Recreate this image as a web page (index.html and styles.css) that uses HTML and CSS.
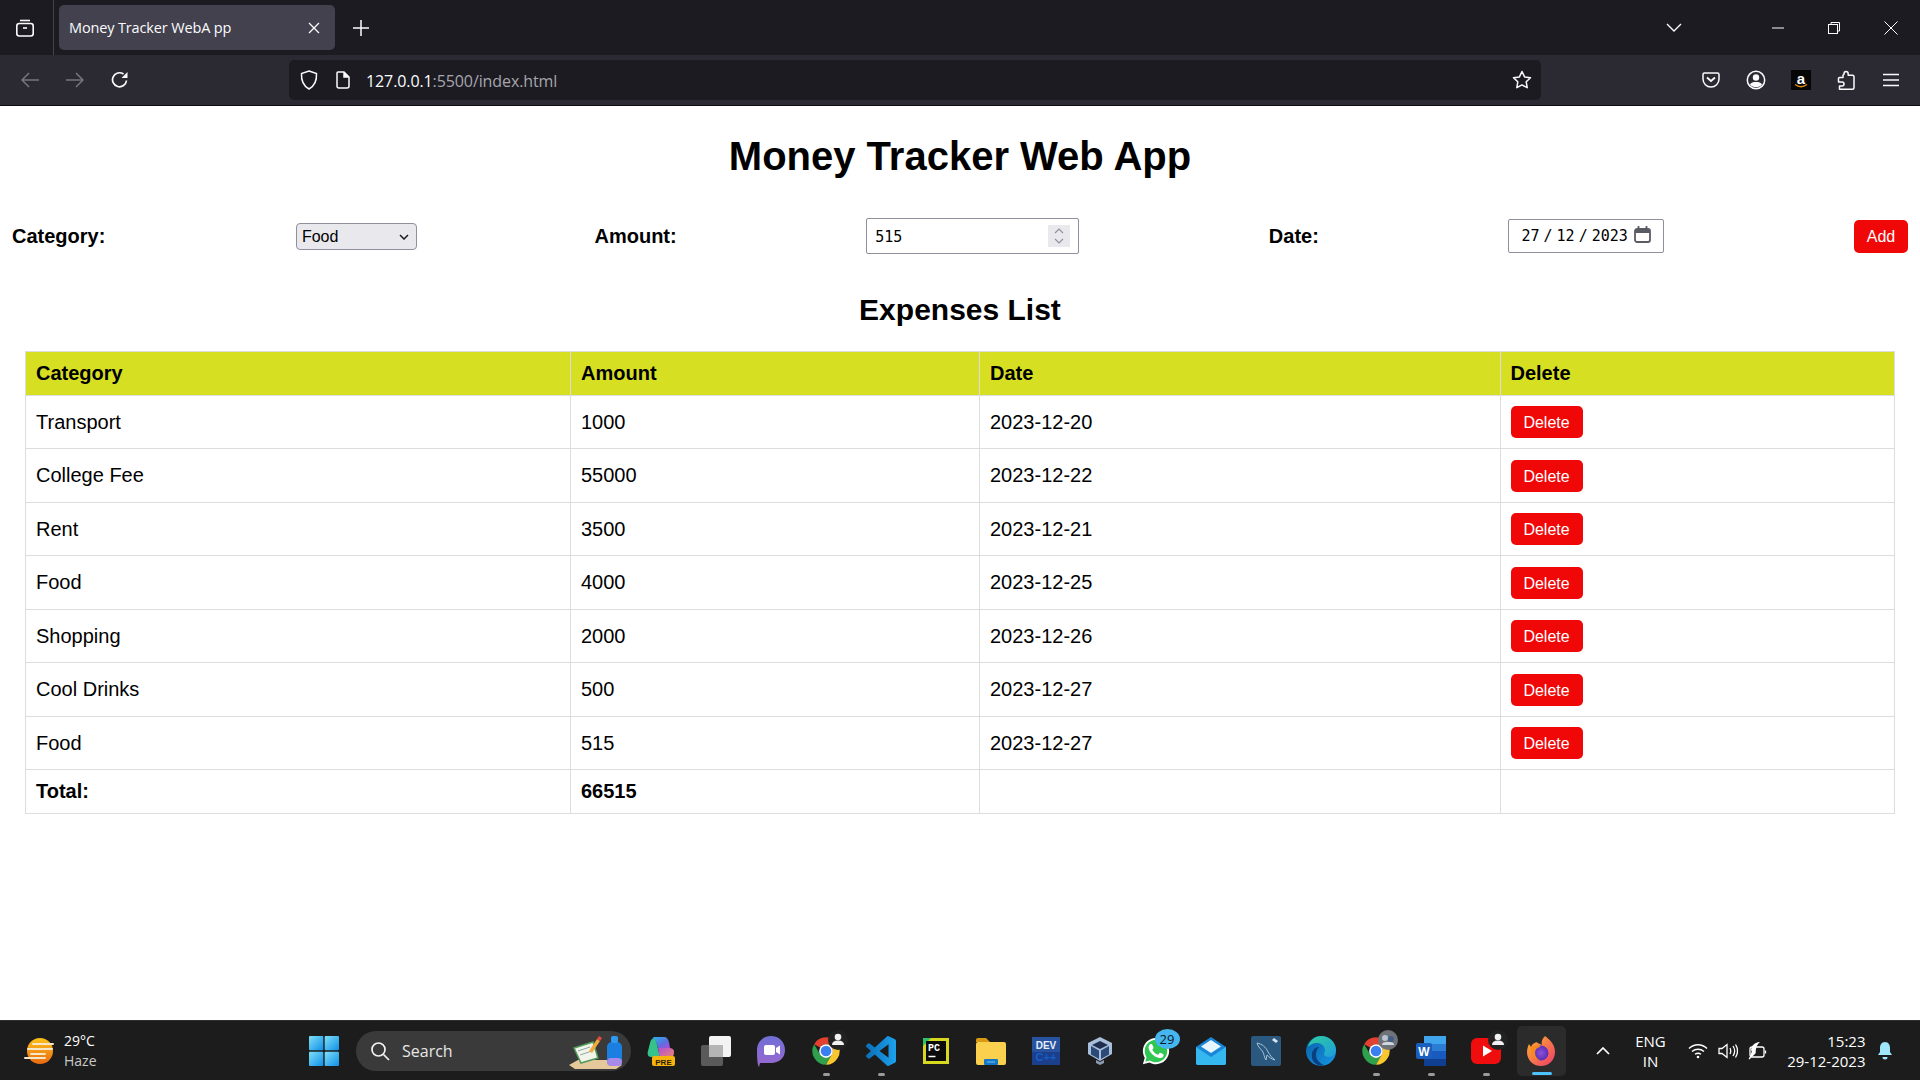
FILE: index.html
```html
<!DOCTYPE html>
<html lang="en">
<head>
<meta charset="utf-8">
<title>Money Tracker Web App</title>
<link rel="stylesheet" href="styles.css">
</head>
<body>
<header class="chrome">
  <div class="tabstrip">
    <div class="tablist-btn">
      <svg width="20" height="20" viewBox="0 0 20 20" fill="none" stroke="#fbfbfe" stroke-width="1.6"><path d="M5 2.5h10"/><rect x="1.8" y="5.5" width="16.4" height="12.5" rx="2.5"/><path d="M8 10h4"/></svg>
    </div>
    <div class="tab-sep"></div>
    <div class="tab">
      <span class="tab-title">Money Tracker WebA pp</span>
      <svg class="tab-close" width="12" height="12" viewBox="0 0 12 12" stroke="#fbfbfe" stroke-width="1.3"><path d="M1 1l10 10M11 1L1 11"/></svg>
    </div>
    <div class="newtab">
      <svg width="16" height="16" viewBox="0 0 16 16" stroke="#fbfbfe" stroke-width="1.5"><path d="M8 0v16M0 8h16"/></svg>
    </div>
    <div class="strip-spacer"></div>
    <svg class="listall" width="16" height="10" viewBox="0 0 16 10" fill="none" stroke="#fbfbfe" stroke-width="1.4"><path d="M1 1l7 7 7-7"/></svg>
    <div class="winbtn win-min"><svg width="12" height="2" viewBox="0 0 12 2" stroke="#fbfbfe"><path d="M0 1h12"/></svg></div>
    <div class="winbtn win-max"><svg width="12" height="12" viewBox="0 0 12 12" fill="none" stroke="#fbfbfe"><path d="M3 2.5V.5h8.5V9H9.5"/><rect x=".5" y="2.5" width="9" height="9"/></svg></div>
    <div class="winbtn win-close"><svg width="14" height="14" viewBox="0 0 14 14" stroke="#fbfbfe"><path d="M.5.5l13 13M13.500.5l-13 13"/></svg></div>
  </div>
  <div class="navbar">
    <div class="nav-btn nav-first"><svg width="18" height="16" viewBox="0 0 18 16" fill="none" stroke="#77767f" stroke-width="1.5"><path d="M18 8H1M8 1L1 8l7 7"/></svg></div>
    <div class="nav-btn"><svg width="18" height="16" viewBox="0 0 18 16" fill="none" stroke="#77767f" stroke-width="1.5"><path d="M0 8h17M10 1l7 7-7 7"/></svg></div>
    <div class="nav-btn"><svg width="18" height="18" viewBox="0 0 18 18" fill="none" stroke="#fbfbfe" stroke-width="1.7"><path d="M15.500 9.500A7 7 0 1 1 12.500 3"/><path d="M16.500 1v6h-6z" fill="#fbfbfe" stroke="none"/></svg></div>
    <div class="urlbar">
      <svg class="url-shield" width="18" height="20" viewBox="0 0 18 20" fill="none" stroke="#fbfbfe" stroke-width="1.5"><path d="M9 1l7.500 2.500c.4 7-2 12.500-7.500 15.500C3.500 16 1.100 10.500 1.500 3.500z"/></svg>
      <svg class="url-page" width="16" height="18" viewBox="0 0 16 18" fill="none" stroke="#fbfbfe" stroke-width="1.5"><path d="M3 1h6l5 5v9a2 2 0 0 1-2 2H4a2 2 0 0 1-2-2V2a1 1 0 0 1 1-1z"/><path d="M9 1v5h5" fill="#fbfbfe"/></svg>
      <span class="url-text"><span class="url-host">127.0.0.1</span>:5500/index.html</span>
      <svg class="url-star" width="20" height="20" viewBox="0 0 20 20" fill="none" stroke="#fbfbfe" stroke-width="1.5" stroke-linejoin="round"><path d="M10 1.500l2.600 5.400 5.900.8-4.300 4.100 1 5.900L10 14.900l-5.200 2.800 1-5.900L1.500 7.700l5.900-.8z"/></svg>
    </div>
    <div class="tools">
      <div class="tool"><svg width="18" height="16" viewBox="0 0 18 16" fill="none" stroke="#fbfbfe" stroke-width="1.5"><path d="M2.500 1h13A1.500 1.500 0 0 1 17 2.500V7a8 8 0 0 1-16 0V2.500A1.500 1.500 0 0 1 2.500 1z"/><path d="M5 5.500l4 3.500 4-3.500" stroke-width="1.800"/></svg></div>
      <div class="tool"><svg width="20" height="20" viewBox="0 0 20 20" fill="none" stroke="#fbfbfe" stroke-width="1.500"><circle cx="10" cy="10" r="8.700"/><circle cx="10" cy="7.500" r="3.200" fill="#fbfbfe" stroke="none"/><path d="M4 14.500c1-2 3-2.500 6-2.500s5 .5 6 2.500c-1.500 1.800-3.500 2.700-6 2.700s-4.500-.9-6-2.700z" fill="#fbfbfe" stroke="none"/></svg></div>
      <div class="tool"><svg width="20" height="20" viewBox="0 0 20 20"><rect width="20" height="20" rx="1" fill="#050505"/><text x="10" y="13.500" class="amz-a">a</text><path d="M4 14.500c4 3 8 3 12 0" fill="none" stroke="#e08a10" stroke-width="1.500"/></svg></div>
      <div class="tool"><svg width="18" height="20" viewBox="0 0 18 20" fill="none" stroke="#fbfbfe" stroke-width="1.500" stroke-linejoin="round"><path d="M9 1.500c1.500 0 2.200 1 2.200 2.500v1.200h4.300c.8 0 1.500.7 1.500 1.500v11c0 .8-.7 1.500-1.500 1.500H2.500V16H5c1.200 0 2-.8 2-2s-.8-2-2-2H1.500V8.500c0-.6.500-1 1-1H6V5.200L7 4c0-1.500.5-2.500 2-2.500z"/></svg></div>
      <div class="tool"><svg width="16" height="14" viewBox="0 0 16 14" stroke="#fbfbfe" stroke-width="1.500"><path d="M0 1.500h16M0 7h16M0 12.500h16"/></svg></div>
    </div>
  </div>
</header>

<main class="page">
  <h1 class="title">Money Tracker Web App</h1>
  <form class="entry">
    <label class="entry-label">Category:</label>
    <div class="select-box">
      <select class="select"><option>Food</option></select>
      <svg class="select-arrow" width="10" height="6" viewBox="0 0 10 6" fill="none" stroke="#1b1b1f" stroke-width="1.500"><path d="M1 1l4 4 4-4"/></svg>
    </div>
    <label class="entry-label entry-amount">Amount:</label>
    <div class="number-box">
      <input class="number" type="text" value="515">
      <div class="spin"><svg width="12" height="18" viewBox="0 0 12 18" fill="none" stroke="#8f8f9d" stroke-width="1.200"><path d="M2 6l4-4 4 4M2 12l4 4 4-4"/></svg></div>
    </div>
    <label class="entry-label">Date:</label>
    <div class="date-box">
      <input class="date" type="text" value="27 / 12 / 2023">
      <svg class="cal" width="17" height="17" viewBox="0 0 17 17" fill="none" stroke="#5b5b66" stroke-width="1.800"><rect x="1" y="3" width="15" height="13" rx="2"/><path d="M1 5.500h15" stroke-width="3"/><path d="M4.500 0v3M12.500 0v3"/></svg>
    </div>
    <button class="btn btn-add" type="button">Add</button>
  </form>
  <h2 class="subtitle">Expenses List</h2>
  <table class="expenses">
    <colgroup><col class="col-a"><col class="col-b"><col class="col-c"><col></colgroup>
    <thead><tr><th>Category</th><th>Amount</th><th>Date</th><th>Delete</th></tr></thead>
    <tbody>
      <tr><td>Transport</td><td>1000</td><td>2023-12-20</td><td><button class="btn btn-del" type="button">Delete</button></td></tr>
      <tr><td>College Fee</td><td>55000</td><td>2023-12-22</td><td><button class="btn btn-del" type="button">Delete</button></td></tr>
      <tr><td>Rent</td><td>3500</td><td>2023-12-21</td><td><button class="btn btn-del" type="button">Delete</button></td></tr>
      <tr><td>Food</td><td>4000</td><td>2023-12-25</td><td><button class="btn btn-del" type="button">Delete</button></td></tr>
      <tr><td>Shopping</td><td>2000</td><td>2023-12-26</td><td><button class="btn btn-del" type="button">Delete</button></td></tr>
      <tr><td>Cool Drinks</td><td>500</td><td>2023-12-27</td><td><button class="btn btn-del" type="button">Delete</button></td></tr>
      <tr><td>Food</td><td>515</td><td>2023-12-27</td><td><button class="btn btn-del" type="button">Delete</button></td></tr>
    </tbody>
    <tfoot><tr><td>Total:</td><td>66515</td><td></td><td></td></tr></tfoot>
  </table>
</main>

<footer class="taskbar">
  <div class="weather">
    <svg width="32" height="28" viewBox="0 0 32 28"><defs><linearGradient id="sun" x1="0" y1="0" x2="0" y2="1"><stop offset="0" stop-color="#fdc21a"/><stop offset="1" stop-color="#e96a12"/></linearGradient></defs><circle cx="16" cy="14" r="13" fill="url(#sun)"/><g stroke="#f6e7c8" stroke-width="2" stroke-linecap="round"><path d="M9 7h20M4 12h24M7 17h14M1 21h20"/></g></svg>
    <div class="weather-text"><span>29°C</span><span class="weather-sub">Haze</span></div>
  </div>
  <div class="slot start"><svg width="30" height="30" viewBox="0 0 30 30"><defs><linearGradient id="win" x1="0" y1="0" x2="1" y2="1"><stop offset="0" stop-color="#7fe0f8"/><stop offset="1" stop-color="#0e8fe8"/></linearGradient></defs><g fill="url(#win)"><rect width="14.300" height="14.300" rx="1"/><rect x="15.700" width="14.300" height="14.300" rx="1"/><rect y="15.700" width="14.300" height="14.300" rx="1"/><rect x="15.700" y="15.700" width="14.300" height="14.300" rx="1"/></g></svg></div>
  <div class="search">
    <svg width="20" height="20" viewBox="0 0 20 20" fill="none" stroke="#f2f2f2" stroke-width="1.700"><circle cx="8.500" cy="8.500" r="6.500"/><path d="M13.500 13.500l5.500 5.500"/></svg>
    <span class="search-text">Search</span>
    <svg class="search-art" width="56" height="36" viewBox="0 0 56 36"><path d="M2 31l9-5h36l8 5-6 4H8z" fill="#e6c99a"/><path d="M7 14l19-6 5 16-17 5z" fill="#f2f4ea" stroke="#4f9a5c" stroke-width="1.500"/><path d="M11 17l12-4M13 21l12-4" stroke="#8aa" stroke-width="1"/><path d="M22 17l8-12 3 2-8 12z" fill="#f2a93b"/><path d="M30 5l2-3 3 2-2 3z" fill="#e8483f"/><rect x="40" y="8" width="15" height="24" rx="5" fill="#1a7fe0"/><rect x="44" y="2" width="7" height="7" rx="2" fill="#2f9bf0"/><rect x="40" y="24" width="15" height="8" rx="4" fill="#a88ae8"/></svg>
  </div>
  <div class="slot">
    <svg width="30" height="32" viewBox="0 0 30 32"><defs><linearGradient id="cop1" x1="0" y1="0" x2="1" y2="1"><stop offset="0" stop-color="#2bb5e8"/><stop offset=".6" stop-color="#5c6fe0"/><stop offset="1" stop-color="#b14cd8"/></linearGradient><linearGradient id="cop2" x1="0" y1="0" x2="1" y2="1"><stop offset="0" stop-color="#b24fd6"/><stop offset="1" stop-color="#f08a6a"/></linearGradient></defs><path d="M8 2h10c3 0 4 2 5 5l1 6H12L10 7c-1-2-2-3-4-3z" fill="url(#cop1)"/><path d="M7 4c2 0 3 2 3.500 4L14 22H5c-3 0-4-3-3-6L4 8c.5-2 1-4 3-4z" fill="#35c28b"/><path d="M12 13h11c3 0 5 1 5 4 0 5-3 7-6 7H14z" fill="url(#cop2)"/><rect x="6" y="21" width="23" height="10" rx="2" fill="#f7b40b"/><text x="17.500" y="29.500" class="pre">PRE</text></svg>
  </div>
  <div class="slot">
    <svg width="30" height="30" viewBox="0 0 30 30"><rect y="9" width="22" height="21" rx="2" fill="#5a5a5a"/><rect x="8" width="22" height="21" rx="2" fill="#f3f3f3"/><rect x="8" y="9" width="14" height="12" fill="#b5b5b5"/></svg>
  </div>
  <div class="slot">
    <svg width="30" height="32" viewBox="0 0 30 32"><defs><linearGradient id="meet" x1="0" y1="0" x2="0" y2="1"><stop offset="0" stop-color="#6f6fd6"/><stop offset="1" stop-color="#9a68cf"/></linearGradient></defs><path d="M15 1c8 0 14 6 14 14s-6 13-14 13H4l-1 4c-1-1-2-5-2-17C1 7 7 1 15 1z" fill="url(#meet)"/><rect x="8" y="10" width="11" height="10" rx="2" fill="#fff"/><path d="M20 13l4-2.500v9L20 17z" fill="#fff"/></svg>
  </div>
  <div class="slot chrome-slot running">
    <svg width="30" height="30" viewBox="0 0 48 48"><path d="M24 2a22 22 0 0 1 19 11H24a11 11 0 0 0-9.500 5.500L5 13A22 22 0 0 1 24 2z" fill="#e3402f"/><path d="M5 13a22 22 0 0 0 19 33l9.500-17a11 11 0 0 1-19 0z" fill="#2fa04c"/><path d="M43 13H24a11 11 0 0 1 9.500 16L24 46A22 22 0 0 0 43 13z" fill="#f7c72d"/><circle cx="24" cy="24" r="11" fill="#fff"/><circle cx="24" cy="24" r="8.500" fill="#3a7ff0"/></svg>
    <svg class="badge-person" width="20" height="20" viewBox="0 0 20 20"><circle cx="10" cy="10" r="10" fill="#222"/><circle cx="10" cy="7" r="3.300" fill="#f2f2f2"/><path d="M4 15c0-3 2-4.500 6-4.500s6 1.500 6 4.500z" fill="#f2f2f2"/></svg>
  </div>
  <div class="slot running">
    <svg width="30" height="30" viewBox="0 0 24 24"><defs><linearGradient id="vsc" x1="0" y1="0" x2="1" y2="0"><stop offset="0" stop-color="#0b6fb8"/><stop offset="1" stop-color="#1da1ec"/></linearGradient></defs><path fill="url(#vsc)" d="M23.150 2.587L18.210.21a1.494 1.494 0 0 0-1.705.29l-9.460 8.630-4.120-3.128a.999.999 0 0 0-1.276.057L.327 7.261A1 1 0 0 0 .326 8.740L3.899 12 .326 15.260a1 1 0 0 0 .001 1.479L1.650 17.940a.999.999 0 0 0 1.276.057l4.120-3.128 9.460 8.630a1.492 1.492 0 0 0 1.704.29l4.942-2.377A1.500 1.500 0 0 0 24 20.060V3.939a1.500 1.500 0 0 0-.85-1.352zm-5.146 14.861L10.826 12l7.178-5.448v10.896z"/></svg>
  </div>
  <div class="slot">
    <svg width="26" height="26" viewBox="0 0 26 26"><rect x="0" y="0" width="26" height="26" fill="#d8d81f"/><path d="M0 0h8L0 8z" fill="#2dc26b"/><rect x="3" y="3" width="20" height="20" fill="#0b0b0b"/><text x="5" y="13" class="pc">PC</text><path d="M5.500 18.500h7" stroke="#fff" stroke-width="1.500"/></svg>
  </div>
  <div class="slot">
    <svg width="30" height="28" viewBox="0 0 30 28"><path d="M0 3a2 2 0 0 1 2-2h8l4 4H0z" fill="#d99a12"/><rect y="5" width="30" height="23" rx="2" fill="#fcd04f"/><rect x="8" y="22" width="14" height="6" rx="1" fill="#1478c9"/><path d="M11 25h8" stroke="#7cc0ef" stroke-width="1"/></svg>
  </div>
  <div class="slot">
    <svg width="28" height="28" viewBox="0 0 28 28"><rect width="28" height="28" fill="#1c3f8c"/><rect y="0" width="28" height="15" fill="#27529f"/><text x="14" y="11.500" class="dev">DEV</text><text x="14" y="24" class="cpp">C++</text></svg>
  </div>
  <div class="slot vbox">
    <svg width="26" height="30" viewBox="0 0 26 30"><path d="M13 1l12 6v11l-12 7-12-7V7z" fill="#a9bfd9"/><path d="M13 5l8 4-8 4-8-4z" fill="#1e2f50"/><path d="M4 10l8 4.500V23l-8-4.500z" fill="#2c4a78"/><path d="M22 10l-8 4.500V23l8-4.500z" fill="#2c4a78"/><path d="M9 24l4 2 4-2v3l-4 2-4-2z" fill="#8a9bb3"/></svg>
  </div>
  <div class="slot wa-slot">
    <svg width="30" height="32" viewBox="0 0 24 24"><path d="M12 1.500C6.200 1.500 1.500 6.200 1.500 12c0 2 .6 3.800 1.500 5.400L1.500 22.500l5.300-1.400c1.500.9 3.300 1.400 5.200 1.400 5.800 0 10.500-4.700 10.500-10.500S17.800 1.500 12 1.500z" fill="#fff"/><path d="M12 3C7 3 3 7 3 12c0 1.800.5 3.400 1.400 4.900L3.500 20.500l3.700-1c1.400.9 3 1.500 4.800 1.500 5 0 9-4 9-9s-4-9-9-9z" fill="#2fc751"/><path fill="#fff" d="M17.472 14.382c-.297-.149-1.758-.867-2.030-.967-.273-.099-.471-.148-.670.150-.197.297-.767.966-.940 1.164-.173.199-.347.223-.644.075-.297-.150-1.255-.463-2.390-1.475-.883-.788-1.480-1.761-1.653-2.059-.173-.297-.018-.458.130-.606.134-.133.298-.347.446-.520.149-.174.198-.298.298-.497.099-.198.050-.371-.025-.520-.075-.149-.669-1.612-.916-2.207-.242-.579-.487-.500-.669-.510-.173-.008-.371-.010-.570-.010-.198 0-.520.074-.792.372-.272.297-1.040 1.016-1.040 2.479 0 1.462 1.065 2.875 1.213 3.074.149.198 2.096 3.200 5.077 4.487.709.306 1.262.489 1.694.625.712.227 1.360.195 1.871.118.571-.085 1.758-.719 2.006-1.413.248-.694.248-1.289.173-1.413-.074-.124-.272-.198-.570-.347z"/></svg>
    <span class="count">29</span>
  </div>
  <div class="slot">
    <svg width="30" height="28" viewBox="0 0 30 28"><path d="M15 0l15 10v16a2 2 0 0 1-2 2H2a2 2 0 0 1-2-2V10z" fill="#1a86d8"/><path d="M15 3l10 6.500L15 16 5 9.500z" fill="#e6f4fc"/><path d="M0 10l15 10 15-10v16a2 2 0 0 1-2 2H2a2 2 0 0 1-2-2z" fill="#35b8f0"/></svg>
  </div>
  <div class="slot">
    <svg width="30" height="30" viewBox="0 0 30 30"><rect width="30" height="30" rx="2" fill="#2a587e"/><path d="M6 7c5 1 9 4 11 9 2 3 4 6 7 8-4-1-6-3-8-5l-1 5c-2-3-2-6-3-8-2-3-5-5-6-9z" fill="none" stroke="#a7c4da" stroke-width="1"/><path d="M23 2l4 3-2 2-4-3z" fill="#dde6ee"/></svg>
  </div>
  <div class="slot">
    <svg width="30" height="30" viewBox="0 0 30 30"><defs><linearGradient id="edge1" x1="0" y1="0" x2="1" y2="1"><stop offset="0" stop-color="#2ecf9a"/><stop offset="1" stop-color="#1f9be0"/></linearGradient><linearGradient id="edge2" x1="0" y1="0" x2="1" y2="1"><stop offset="0" stop-color="#0a5fa8"/><stop offset="1" stop-color="#1597e5"/></linearGradient></defs><circle cx="15" cy="15" r="15" fill="url(#edge2)"/><path d="M2 11C4 4 9 0 15 0c8 0 15 6 15 14 0 4-3 7-7 7-3 0-5-1-5-3 0-1 1-2 1-4 0-4-4-7-8-7-4 0-7 2-9 4z" fill="url(#edge1)"/><path d="M10 19c0 4 3 8 8 10-2 1-4 1-6 0-5-2-7-7-6-12 1-4 4-6 7-6-2 2-3 5-3 8z" fill="#0b3f80"/></svg>
  </div>
  <div class="slot running chrome-slot">
    <svg width="30" height="30" viewBox="0 0 48 48"><path d="M24 2a22 22 0 0 1 19 11H24a11 11 0 0 0-9.500 5.500L5 13A22 22 0 0 1 24 2z" fill="#e3402f"/><path d="M5 13a22 22 0 0 0 19 33l9.500-17a11 11 0 0 1-19 0z" fill="#2fa04c"/><path d="M43 13H24a11 11 0 0 1 9.500 16L24 46A22 22 0 0 0 43 13z" fill="#f7c72d"/><circle cx="24" cy="24" r="11" fill="#fff"/><circle cx="24" cy="24" r="8.500" fill="#3a7ff0"/></svg>
    <svg class="badge-person" width="20" height="20" viewBox="0 0 20 20"><circle cx="10" cy="10" r="10" fill="#6f7278"/><circle cx="7" cy="8" r="3" fill="#b9c4d0"/><circle cx="13" cy="9" r="3" fill="#3f5f86"/><path d="M4 15c0-3 3-3 6-3s6 0 6 3z" fill="#cfd6de"/></svg>
  </div>
  <div class="slot running">
    <svg width="30" height="30" viewBox="0 0 30 30"><rect x="8" y="0" width="22" height="30" rx="2" fill="#2b7cd3"/><rect x="8" y="0" width="22" height="8" fill="#41a5ee"/><rect x="8" y="15" width="22" height="8" fill="#185abd"/><rect x="8" y="23" width="22" height="7" fill="#103f91"/><rect y="7" width="16" height="16" rx="2" fill="#1a5fc0"/><text x="8" y="19.500" class="word">W</text></svg>
  </div>
  <div class="slot running chrome-slot">
    <svg width="30" height="26" viewBox="0 0 30 26"><rect width="30" height="26" rx="6" fill="#f00d0d"/><path d="M12 7.500l9 5.500-9 5.500z" fill="#fff"/></svg>
    <svg class="badge-person" width="20" height="20" viewBox="0 0 20 20"><circle cx="10" cy="10" r="10" fill="#222"/><circle cx="10" cy="7" r="3.300" fill="#f2f2f2"/><path d="M4 15c0-3 2-4.500 6-4.500s6 1.500 6 4.500z" fill="#f2f2f2"/></svg>
  </div>
  <div class="slot active">
    <svg width="30" height="32" viewBox="0 0 30 32"><defs><linearGradient id="ff" x1="0" y1="0" x2="1" y2="1"><stop offset="0" stop-color="#ffb52b"/><stop offset="1" stop-color="#ee3a6b"/></linearGradient><radialGradient id="ffc"><stop offset="0" stop-color="#8b52d8"/><stop offset="1" stop-color="#5b2db8"/></radialGradient></defs><path d="M19 1c4 3 10 8 10 16 0 8-6 14-14 14S1 25 1 17c0-3 1-6 2-8l2 3c1-3 3-4 6-5 0 2 3 1 5 3-1-3 0-6 3-9z" fill="url(#ff)"/><circle cx="15" cy="18" r="7.500" fill="url(#ffc)"/><path d="M5 12c3-2 7-2 10 0-3 0-6 2-6 6 0 3 2 6 5 7-5 0-9-4-9-8 0-2 0-4 0-5z" fill="#f58a1f"/></svg>
    <span class="active-bar"></span>
  </div>
  <div class="tray">
    <svg class="tray-up" width="14" height="8" viewBox="0 0 14 8" fill="none" stroke="#fff" stroke-width="1.700"><path d="M1 7l6-6 6 6"/></svg>
    <div class="lang"><span>ENG</span><span>IN</span></div>
    <svg class="tray-wifi" width="20" height="16" viewBox="0 0 20 16" fill="none" stroke="#fff" stroke-width="1.400"><path d="M1 5.500c5-5 13-5 18 0M4 8.500c3.500-3 8.500-3 12 0M7 11.300c2-1.500 4-1.500 6 0"/><circle cx="10" cy="14" r="1.300" fill="#fff" stroke="none"/></svg>
    <svg class="tray-vol" width="20" height="16" viewBox="0 0 20 16" fill="none" stroke="#fff" stroke-width="1.300"><path d="M1 5.500h3L9 1.500v13l-5-4H1z"/><path d="M12 5c1 2 1 4 0 6M15 3c2 3 2 7 0 10M17.500 1.500c2.500 4 2.500 9 0 13"/></svg>
    <svg class="tray-bat" width="20" height="18" viewBox="0 0 20 18" fill="none" stroke="#fff" stroke-width="1.300"><rect x="2" y="5" width="14" height="10" rx="2"/><path d="M17.500 8.500v3"/><path d="M1 17L7 11c0-4 0-7 3-10-4 1-7 4-6 8" fill="#fff"/></svg>
    <div class="clock"><span>15:23</span><span>29-12-2023</span></div>
    <svg class="tray-bell" width="16" height="20" viewBox="0 0 16 20"><path d="M8 1c3.500 0 5 3 5 6v4l2 3H1l2-3V7c0-3 1.500-6 5-6z" fill="#9fe6fb"/><path d="M5.500 16h5a2.500 2.500 0 0 1-5 0z" fill="#9fe6fb"/></svg>
  </div>
</footer>
</body>
</html>
```

FILE: styles.css
```css
* { box-sizing: border-box; }
html, body { margin: 0; height: 100%; }
body {
  display: flex;
  flex-direction: column;
  height: 100vh;
  overflow: hidden;
  background: #fff;
  font-family: "Liberation Sans", Arial, sans-serif;
  color: #000;
}
svg { display: block; flex: none; }

/* browser chrome */
.chrome { flex: none; height: 106px; background: #2b2a33; border-bottom: 1px solid #0c0c0d; color: #fbfbfe; font-family: "Open Sans", sans-serif; }
.tabstrip { height: 55px; background: #1c1b22; display: flex; align-items: center; }
.tablist-btn { width: 50px; margin-right: 3px; display: flex; justify-content: center; }
.tab-sep { width: 1px; height: 55px; background: #44434c; }
.tab { width: 276px; height: 45px; margin-left: 5px; background: #42414d; border-radius: 5px; display: flex; align-items: center; padding: 0 15px 0 10px; justify-content: space-between; }
.tab-title { font-size: 14.500px; letter-spacing: -.14px; }
.newtab { width: 52px; display: flex; justify-content: center; }
.strip-spacer { flex: 1; }
.listall { margin-right: 68px; }
.winbtn { width: 56.500px; display: flex; justify-content: center; }
.win-close { margin-right: 1px; }
.navbar { height: 50px; display: flex; align-items: center; }
.nav-btn { width: 45px; display: flex; justify-content: center; }
.nav-first { margin-left: 7px; }
.urlbar { width: 1252px; height: 40px; margin-left: 147px; background: #1c1b22; border-radius: 5px; display: flex; align-items: center; padding: 0 9px 0 11px; }
.url-page { margin-left: 17px; }
.url-text { margin-left: 15px; padding-top: 2px; flex: 1; font-size: 16px; color: #a6a6ad; letter-spacing: -.1px; }
.url-host { color: #fbfbfe; }
.tools { display: flex; align-items: center; margin-left: 147px; }
.tool { width: 45px; display: flex; justify-content: center; align-items: center; }
.amz-a { fill: #fff; font: bold 15px "Liberation Sans", sans-serif; text-anchor: middle; }

/* page */
.page { flex: 1; min-height: 0; }
.title { margin: 27px 0 0; font-size: 40px; line-height: 46px; font-weight: bold; text-align: center; }
.entry { margin-top: 39px; padding: 0 12px; height: 36px; display: flex; align-items: center; justify-content: space-between; }
.entry-label { font-size: 20px; font-weight: bold; }
.entry-amount { margin-left: -12px; }
.select-box { position: relative; width: 121px; height: 27px; margin-left: 1px; }
.select { width: 100%; height: 100%; appearance: none; background: #e9e9ed; border: 1px solid #8f8f9d; border-radius: 4px; font: 16px "Liberation Sans", sans-serif; padding: 0 0 0 5px; color: #000; }
.select-arrow { position: absolute; right: 8px; top: 11px; }
.number-box { position: relative; width: 213px; height: 36px; }
.number { width: 100%; height: 100%; border: 1px solid #8f8f9d; border-radius: 2px; font: 15px "DejaVu Sans Mono", monospace; padding: 1px 0 0 8px; background: #fff; color: #000; }
.spin { position: absolute; right: 9px; top: 7px; width: 22px; height: 22px; background: #e9e9ed; display: flex; align-items: center; justify-content: center; }
.date-box { position: relative; width: 156px; height: 34px; }
.date { width: 100%; height: 100%; border: 1px solid #8f8f9d; border-radius: 2px; font: 15px "DejaVu Sans Mono", monospace; padding: 0 0 0 12px; background: #fff; color: #000; word-spacing: -5px; }
.cal { position: absolute; right: 13px; top: 7px; }
.btn { background: #f00808; color: #fff; border: 0; border-radius: 5px; font: 16px "Liberation Sans", sans-serif; }
.btn-add { width: 54px; height: 33px; padding: 2px 0 0; }
.btn-del { display: block; width: 72px; height: 32px; padding: 2px 0 0; }
.subtitle { margin: 39px 0 0; font-size: 30px; line-height: 33px; font-weight: bold; text-align: center; }
.expenses { width: 1870px; margin: 24.500px 0 0 25px; border-collapse: collapse; table-layout: fixed; font-size: 20px; }
.col-a { width: 545px; }
.col-b { width: 409px; }
.col-c { width: 520.500px; }
.expenses th, .expenses td { border: 1px solid #ddd; padding: 0 10px; text-align: left; }
.expenses th { height: 44px; background: #d7df23; font-weight: bold; }
.expenses td { height: 53.500px; padding-top: 1px; }
.expenses tfoot td { height: 43.500px; font-weight: bold; }

/* taskbar */
.taskbar { flex: none; height: 60px; background: #1c1c1c; border-top: 1px solid #2e2e2e; display: flex; align-items: center; color: #fff; font-family: "Open Sans", sans-serif; font-size: 14px; }
.weather { width: 296px; padding-left: 24px; display: flex; align-items: center; gap: 8px; }
.weather-text { display: flex; flex-direction: column; line-height: 20px; }
.weather-sub { color: #c9c9c9; }
.slot { position: relative; width: 55px; height: 50px; display: flex; align-items: center; justify-content: center; flex: none; }
.start { margin-right: 5px; }
.search { width: 275px; height: 40px; margin-right: 2.500px; position: relative; background: #3a3a3a; border-radius: 20px; display: flex; align-items: center; padding-left: 14px; }
.search-text { margin-left: 12px; font-size: 16px; color: #e6e6e6; }
.search-art { position: absolute; right: 8px; bottom: 1px; }
.pre { fill: #2a1a00; font: bold 8px "Liberation Sans", sans-serif; text-anchor: middle; }
.pc { fill: #fff; font: bold 10px "Liberation Mono", monospace; }
.dev { fill: #e8eef8; font: bold 10px "Liberation Sans", sans-serif; text-anchor: middle; }
.cpp { fill: #1560c8; font: bold 11px "Liberation Sans", sans-serif; text-anchor: middle; }
.word { fill: #fff; font: bold 12px "Liberation Sans", sans-serif; text-anchor: middle; }
.running::after { content: ""; position: absolute; left: 24px; bottom: 0; width: 7px; height: 3px; border-radius: 2px; background: #9a9a9a; }
.vbox svg { margin-right: 3px; }
.badge-person { position: absolute; left: 29px; top: 4px; }
.count { position: absolute; left: 26px; top: 3px; width: 25px; height: 20px; border-radius: 50%; background: #45b6f0; color: #0c1a22; font-size: 13px; line-height: 20px; text-align: center; }
.active { background: #2b2b2b; border-radius: 5px; width: 49px; margin: 0 3px; }
.active-bar { position: absolute; left: 15px; bottom: 1px; width: 20px; height: 3px; border-radius: 2px; background: #4cc2ff; }
.tray { flex: 1; display: flex; align-items: center; }
.tray-up { margin-left: 27px; }
.lang { width: 36px; margin-left: 23px; display: flex; flex-direction: column; align-items: center; line-height: 20px; font-size: 15px; }
.tray-wifi { margin-left: 19px; }
.tray-vol { margin-left: 10px; }
.tray-bat { margin-left: 10px; }
.clock { width: 98px; display: flex; flex-direction: column; align-items: flex-end; line-height: 20px; font-size: 15px; }
.tray-bell { margin-left: 11px; }
```
